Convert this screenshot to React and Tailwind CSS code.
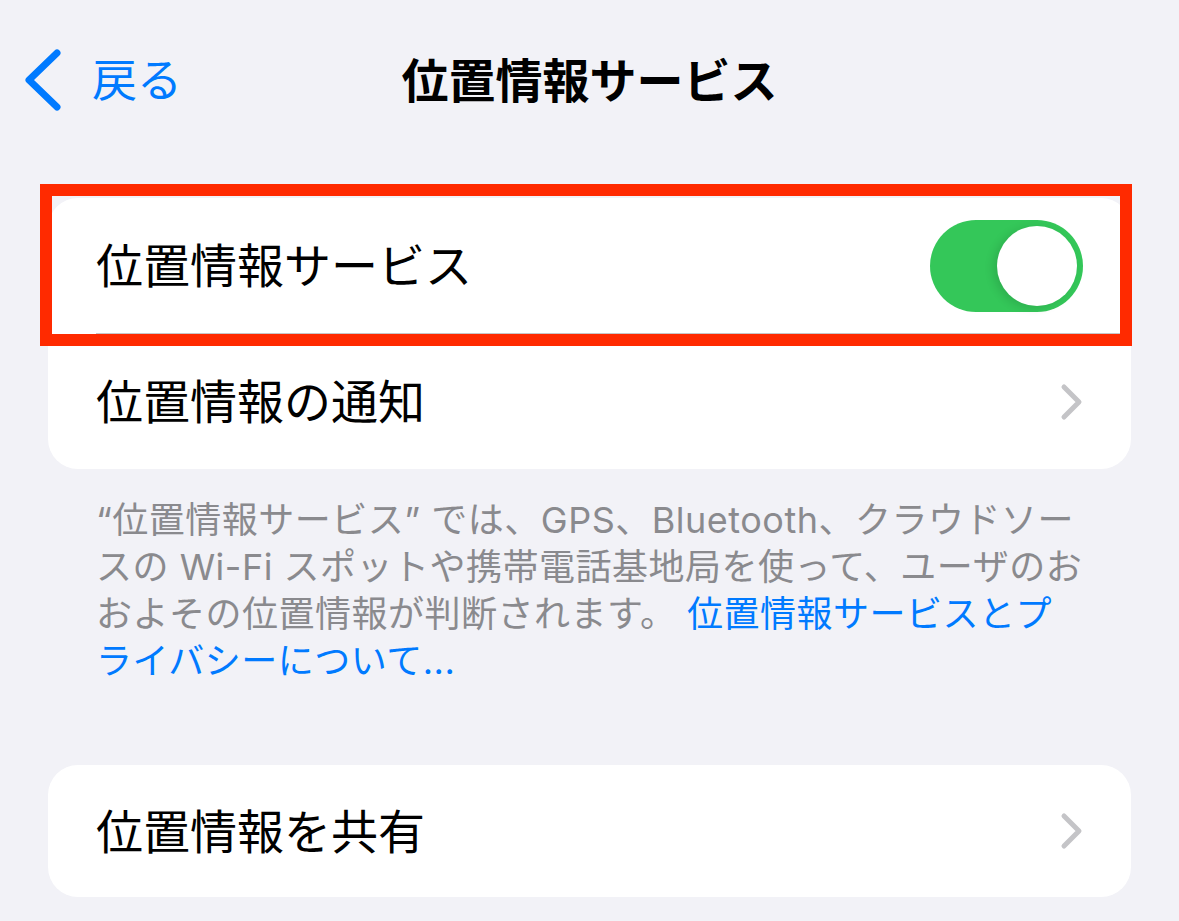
import React from 'react'

const font = { fontFamily: '"Inter", "Noto Sans CJK JP", sans-serif' }

const Chevron = () => (
  <svg width="26" height="38" viewBox="0 0 26 38" className="shrink-0">
    <path d="M5 4 L20 19 L5 34" fill="none" stroke="#c4c4c7" strokeWidth="5" strokeLinecap="round" strokeLinejoin="round" />
  </svg>
)

const Toggle = () => (
  <div className="flex h-[92px] w-[153px] items-center justify-end rounded-full bg-[#34c759] pr-[6px]">
    <div className="h-[80px] w-[80px] rounded-full bg-white shadow-[-4px_2px_10px_rgba(0,0,0,0.12)]" />
  </div>
)

const App = () => {
  return (
    <div className="min-h-[921px] w-[1179px] bg-[#f2f2f7] text-black" style={font}>
      {/* nav bar */}
      <div className="grid h-[160px] grid-cols-[1fr_auto_1fr] items-center">
        <div className="flex items-center gap-[28px] pl-[22px]">
          <svg width="42" height="66" viewBox="0 0 42 66">
            <path d="M35 6 L7 33 L35 60" fill="none" stroke="#007aff" strokeWidth="7" strokeLinecap="round" strokeLinejoin="round" />
          </svg>
          <span className="text-[45px] leading-none text-[#007aff]">戻る</span>
        </div>
        <h1 className="text-[47px] font-bold leading-none">位置情報サービス</h1>
        <div />
      </div>

      <div className="mx-[48px] mt-[38px]">
        {/* first group */}
        <div className="relative">
          <div className="overflow-hidden rounded-[30px] bg-white">
            <div className="flex h-[135px] items-center justify-between pl-[48px] pr-[48px]">
              <span className="text-[47px] leading-none">位置情報サービス</span>
              <Toggle />
            </div>
            <div className="ml-[48px] h-px bg-[#c6c6c8]" />
            <div className="flex h-[135px] items-center justify-between pl-[48px] pr-[46px]">
              <span className="text-[47px] leading-none">位置情報の通知</span>
              <Chevron />
            </div>
          </div>
          {/* highlight frame */}
          <div className="pointer-events-none absolute left-[-8px] top-[-14px] h-[162px] w-[1092px] border-[12px] border-[#ff2a00]" />
        </div>

        {/* footer text */}
        <div className="mt-[28px] pl-[48px] text-[36px] leading-[47px] tracking-[0.5px] text-[#8a8a8e]">
          <div className="whitespace-nowrap">“位置情報サービス” では、GPS、Bluetooth、クラウドソー</div>
          <div className="whitespace-nowrap">スの Wi-Fi スポットや携帯電話基地局を使って、ユーザのお</div>
          <div className="whitespace-nowrap">
            およその位置情報が判断されます。 <span className="text-[#007aff]">位置情報サービスとプ</span>
          </div>
          <div className="whitespace-nowrap text-[#007aff]">ライバシーについて...</div>
        </div>

        {/* second group */}
        <div className="mt-[80px] flex h-[132px] items-center justify-between rounded-[30px] bg-white pl-[48px] pr-[46px]">
          <span className="text-[47px] leading-none">位置情報を共有</span>
          <Chevron />
        </div>
      </div>
    </div>
  )
}

export default App
